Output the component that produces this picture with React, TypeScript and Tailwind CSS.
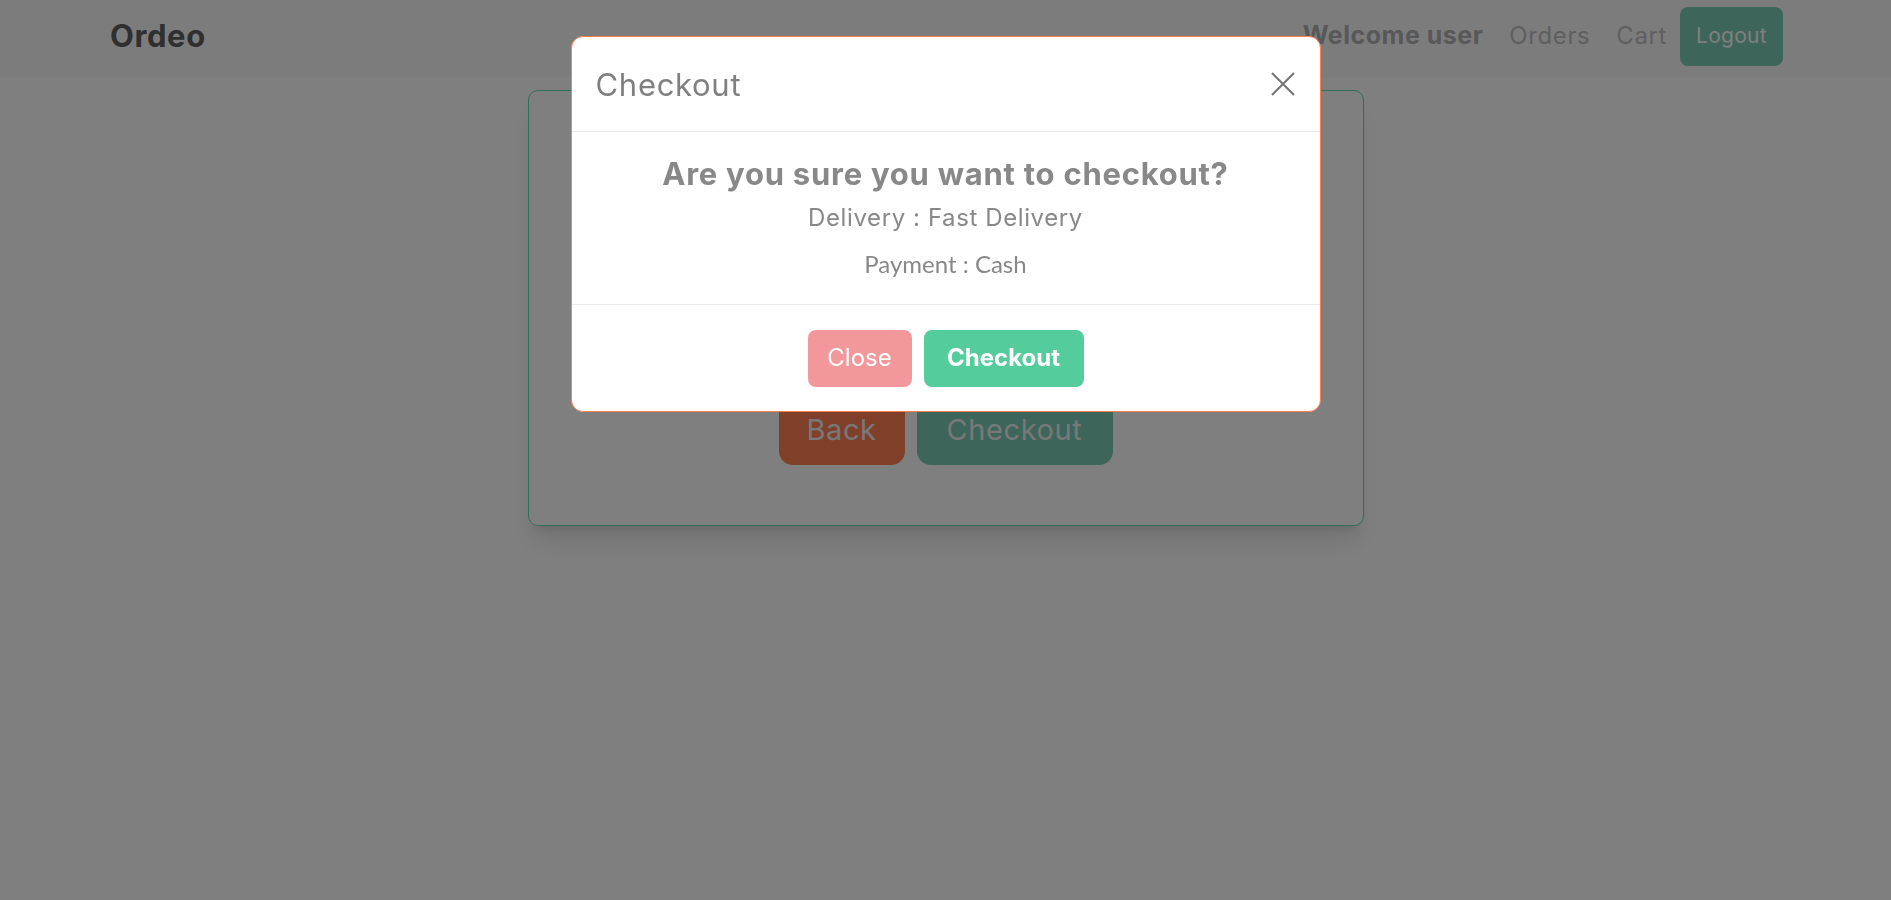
import React from 'react';

function NavBar() {
  return (
    <nav className="h-[77px] bg-[#f8f9fa] flex items-center justify-between pl-[110px] pr-[108px] pb-[5px]">
      <span className="text-[31px] font-bold text-[#5e5e5e] tracking-[0.6px]">Ordeo</span>
      <div className="flex items-center">
        <span className="px-[13px] text-[25px] font-bold text-[#b0b0b0] tracking-[0.5px]">Welcome user</span>
        <a className="px-[13px] text-[24px] text-[#bebebe] tracking-[0.6px]">Orders</a>
        <a className="px-[13px] text-[24px] text-[#bebebe] tracking-[0.6px]">Cart</a>
        <button className="w-[103px] h-[59px] rounded-[8px] bg-[#7acab2] text-white text-[21px] tracking-[0.3px]">Logout</button>
      </div>
    </nav>
  );
}

function CheckoutModal() {
  return (
    <div className="fixed inset-0 flex justify-center pt-[36px]">
      <div className="w-[750px] h-[376px] bg-white border border-[#ff7f50] rounded-[12px] flex flex-col overflow-hidden">
        <div className="h-[95px] flex items-center justify-between pl-[24px] pr-[24px] border-b border-[#e9ecef]">
          <h5 className="text-[31px] text-[#808080] tracking-[0.7px] pt-[2px]">Checkout</h5>
          <svg width="26" height="24" viewBox="0 0 26 24" className="text-[#777]">
            <path d="M2 1 L24 23 M24 1 L2 23" stroke="currentColor" strokeWidth="2.2" fill="none" />
          </svg>
        </div>
        <div className="flex-1 flex flex-col items-center text-[#888] pt-[24px]">
          <h3 className="text-[31px] font-bold leading-[36px] tracking-[0.75px]">Are you sure you want to checkout?</h3>
          <p className="text-[24px] leading-[34px] mt-[9px] tracking-[0.6px]">Delivery : Fast Delivery</p>
          <p className="text-[24px] leading-[34px] mt-[12px] font-['Lato',sans-serif]">Payment : Cash</p>
        </div>
        <div className="h-[107px] border-t border-[#e9ecef] flex items-center justify-center gap-[12px]">
          <button className="w-[104px] h-[57px] rounded-[8px] bg-[#f2979a] text-white text-[24px]">Close</button>
          <button className="w-[160px] h-[57px] rounded-[8px] bg-[#55cc9b] text-white text-[24px] font-bold">Checkout</button>
        </div>
      </div>
    </div>
  );
}

export default function App() {
  return (
    <div className="relative min-h-[900px] bg-white font-['Inter',sans-serif]">
      <NavBar />
      <div className="mt-[13px] mx-auto w-[836px] h-[436px] border border-[#60dcb0] rounded-[10px] shadow-xl flex items-end justify-center gap-[12px] pb-[60px]">
        <button className="w-[126px] h-[70px] rounded-[14px] bg-[#ff7f50] text-[#f0f0f0] text-[29px] tracking-[0.6px]">Back</button>
        <button className="w-[196px] h-[70px] rounded-[14px] bg-[#7acab2] text-[#f0f0f0] text-[29px] tracking-[0.6px]">Checkout</button>
      </div>
      <div className="fixed inset-0 bg-black/50" />
      <CheckoutModal />
    </div>
  );
}
